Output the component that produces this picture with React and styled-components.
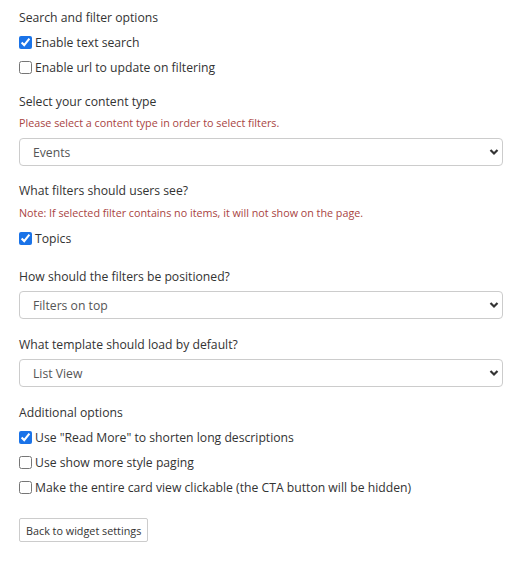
import React from "react";
import styled, { createGlobalStyle } from "styled-components";

const GlobalStyle = createGlobalStyle`
body {
  margin: 0;
  background: #fff;
  font-family: "Open Sans", "Liberation Sans", sans-serif;
  color: #333;
}
`;

const Page = styled.div`
  padding: 9px 23px 20px 19px;
  display: flex;
  flex-direction: column;
`;

const Section = styled.div`
  display: flex;
  flex-direction: column;
  margin-bottom: ${(p) => p.$gap ?? 15}px;
`;

const Heading = styled.div`
  font-size: 12.2px;
  line-height: 18px;
  color: #333;
  margin-bottom: ${(p) => p.$mb ?? 6}px;
`;

const Note = styled.div`
  font-size: 10.75px;
  line-height: 16px;
  color: #a94442;
  margin-bottom: ${(p) => p.$mb ?? 7}px;
`;

const CheckRow = styled.label`
  display: flex;
  align-items: center;
  height: 18px;
  font-size: 12.2px;
  color: #333;
  margin-bottom: 7px;
  input {
    margin: 0 3px 0 0;
    width: 13px;
    height: 13px;
    accent-color: #1a73e8;
  }
`;

const SelectWrap = styled.div`
  position: relative;
  width: 484px;
`;

const Select = styled.select`
  appearance: none;
  width: 100%;
  height: 28px;
  border: 1px solid #ccc;
  border-radius: 4px;
  background: #fff;
  padding: 0 13px;
  font-family: "Open Sans", "Liberation Sans", sans-serif;
  font-size: 12.2px;
  color: #555;
  outline: none;
`;

const Chevron = styled.svg`
  position: absolute;
  right: 4px;
  top: 10px;
  pointer-events: none;
`;

const Button = styled.button`
  align-self: flex-start;
  height: 24px;
  padding: 0 6px;
  border: 1px solid #ccc;
  border-radius: 2px;
  background: #fff;
  font-family: "Open Sans", "Liberation Sans", sans-serif;
  font-size: 10.8px;
  color: #333;
  cursor: pointer;
  margin-top: 15px;
`;

const Check = ({ checked, children }) => (
  <CheckRow>
    <input type="checkbox" defaultChecked={checked} />
    {children}
  </CheckRow>
);

const Dropdown = ({ value }) => (
  <SelectWrap>
    <Select defaultValue={value}>
      <option>{value}</option>
    </Select>
    <Chevron width="10" height="8" viewBox="0 0 10 8">
      <path d="M1.5 2 L5 5.5 L8.5 2" fill="none" stroke="#333" strokeWidth="2.2" />
    </Chevron>
  </SelectWrap>
);

export default function App() {
  return (
    <>
      <GlobalStyle />
      <Page>
        <Section $gap={10}>
          <Heading>Search and filter options</Heading>
          <Check checked>Enable text search</Check>
          <Check>Enable url to update on filtering</Check>
        </Section>

        <Section $gap={16}>
          <Heading $mb={4}>Select your content type</Heading>
          <Note>Please select a content type in order to select filters.</Note>
          <Dropdown value="Events" />
        </Section>

        <Section $gap={14}>
          <Heading $mb={5}>What filters should users see?</Heading>
          <Note $mb={8}>Note: If selected filter contains no items, it will not show on the page.</Note>
          <Check checked>Topics</Check>
        </Section>

        <Section $gap={17}>
          <Heading $mb={5}>How should the filters be positioned?</Heading>
          <Dropdown value="Filters on top" />
        </Section>

        <Section $gap={17}>
          <Heading $mb={5}>What template should load by default?</Heading>
          <Dropdown value="List View" />
        </Section>

        <Section $gap={0}>
          <Heading>Additional options</Heading>
          <Check checked>Use "Read More" to shorten long descriptions</Check>
          <Check>Use show more style paging</Check>
          <Check>Make the entire card view clickable (the CTA button will be hidden)</Check>
        </Section>

        <Button>Back to widget settings</Button>
      </Page>
    </>
  );
}
